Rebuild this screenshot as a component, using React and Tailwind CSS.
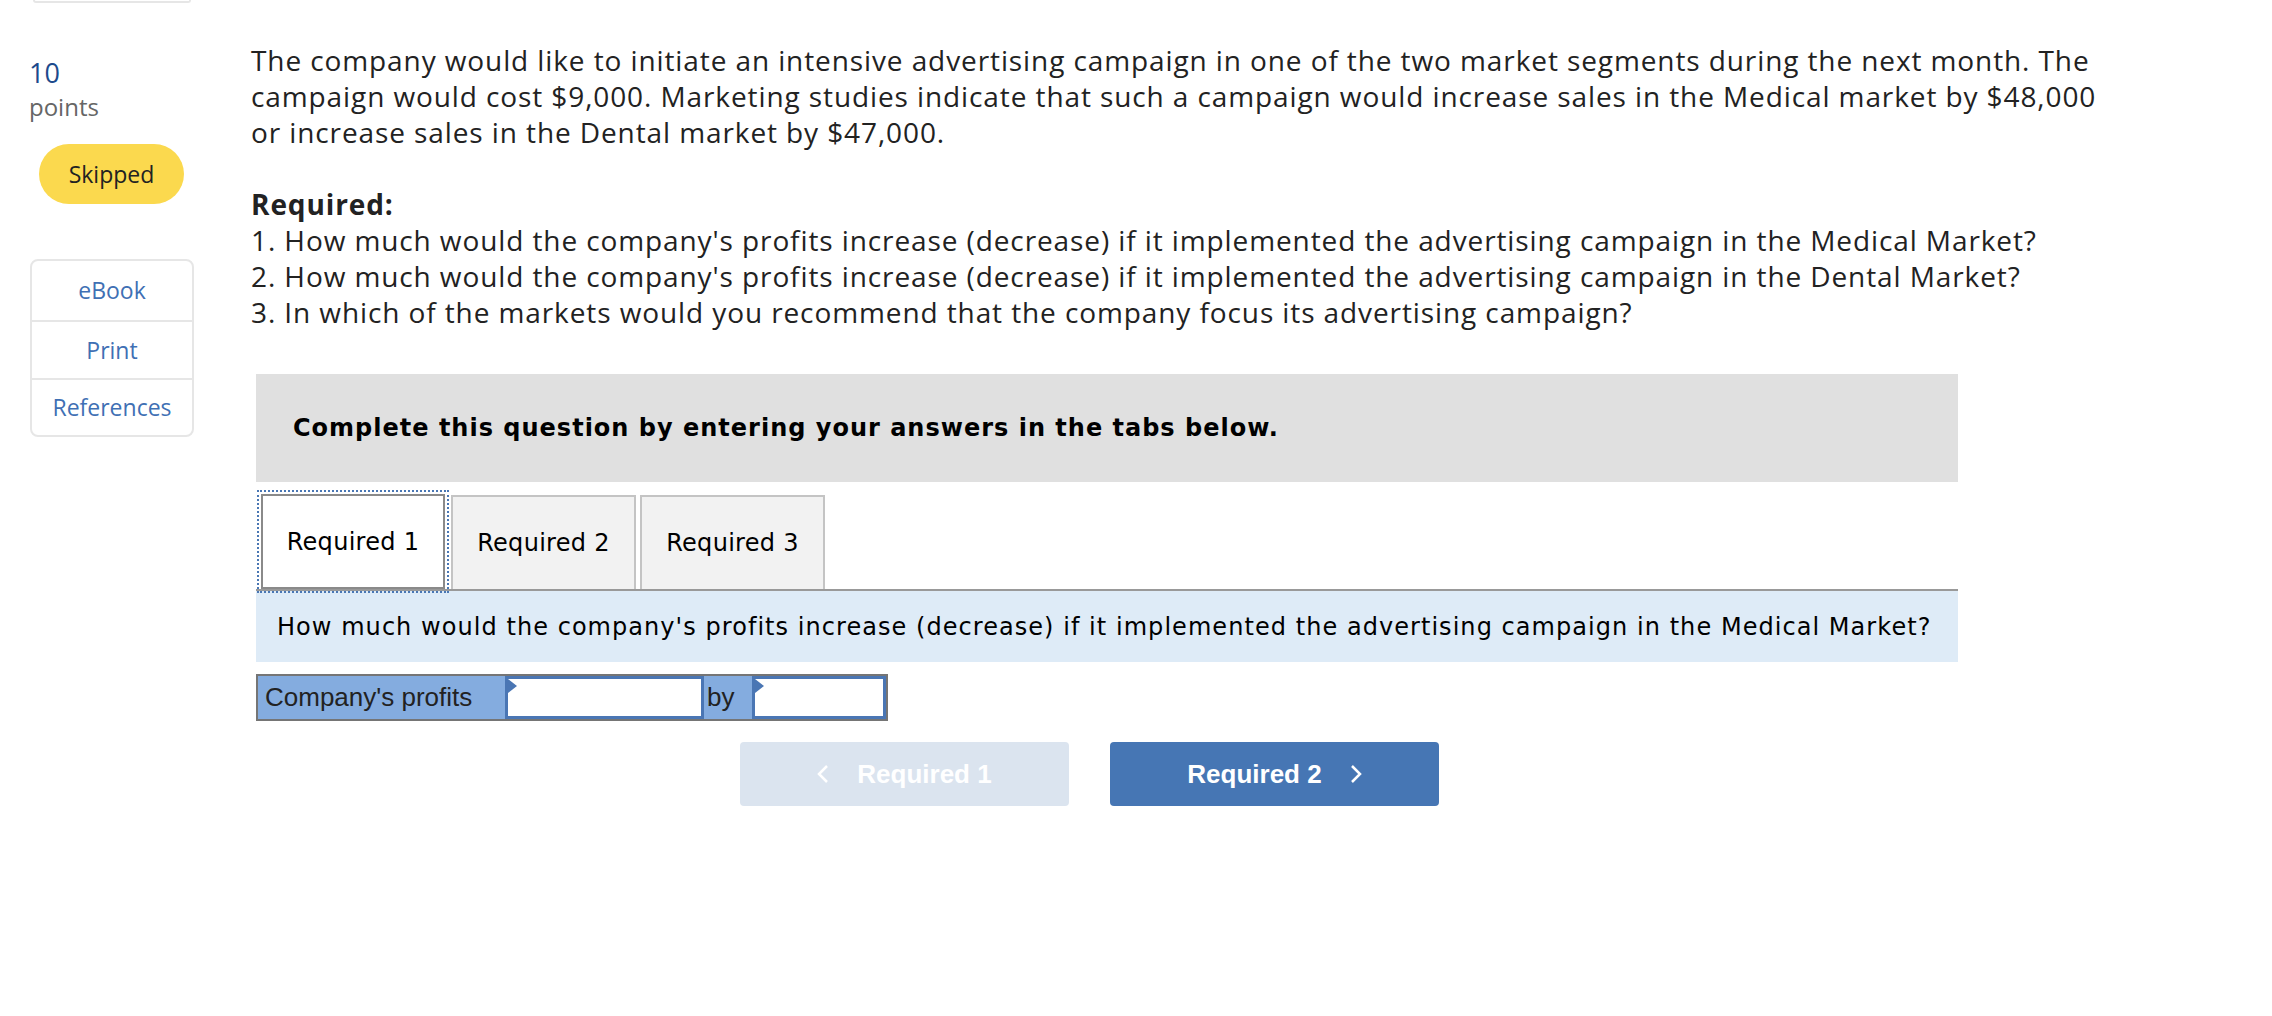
import React from "react"

const sans = { fontFamily: "'Open Sans', Lato, sans-serif" }

const Sidebar = () => {
  return (
    <aside className="w-[251px] shrink-0 font-['Open_Sans',sans-serif]">
      <div className="ml-[33px] h-[3px] w-[158px] rounded-b-lg border-x-2 border-b-2 border-[#e6e6e6]"></div>
      <div className="pl-[29px] pt-[53px]">
        <div className="text-[27px] leading-[34px] text-[#1d4a8c]">10</div>
        <div className="text-[24px] leading-[34px] text-[#666666]">points</div>
      </div>
      <div className="ml-[39px] mt-[20px] flex h-[60px] w-[145px] items-center justify-center rounded-full bg-[#fbd94e] text-[23px] text-[#222222]">
        Skipped
      </div>
      <ul className="ml-[30px] mt-[55px] w-[164px] rounded-lg border-2 border-[#e6e6e6] text-[23px] text-[#3f70b4]">
        <li className="flex h-[61px] items-center justify-center border-b-2 border-[#e6e6e6]">eBook</li>
        <li className="flex h-[58px] items-center justify-center border-b-2 border-[#e6e6e6]">Print</li>
        <li className="flex h-[55px] items-center justify-center">References</li>
      </ul>
    </aside>
  )
}

const Tab = ({ label, active, className }) => (
  <div
    className={
      active
        ? "flex h-[95px] w-[184px] items-center justify-center border-2 border-[#8a8a8a] bg-white outline-2 outline-dotted outline-offset-2 outline-[#4a77b4] " + className
        : "flex h-[94px] w-[185px] items-center justify-center border-2 border-b-0 border-[#c4c4c4] bg-[#f2f2f2] " + className
    }
  >
    {label}
  </div>
)

const InputCell = ({ width }) => (
  <div className={"relative h-full border-[3px] border-[#4a76b4] bg-white " + width}>
    <span className="absolute left-0 top-0 h-0 w-0 border-y-[7px] border-l-[9px] border-y-transparent border-l-[#4a76b4]"></span>
  </div>
)

export default function App() {
  return (
    <div className="flex min-h-screen bg-white">
      <Sidebar />

      <main className="w-[1900px]">
        {/* Question text */}
        <div className="w-[1861px] pt-[42px] text-[28px] leading-[36px] tracking-[0.9px] text-[#222222]" style={sans}>
          <p>
            The company would like to initiate an intensive advertising campaign in one of the two market segments during the next month. The campaign would cost $9,000. Marketing studies indicate that such a campaign would increase sales in the Medical market by $48,000 or increase sales in the Dental market by $47,000.
          </p>
          <p className="mt-[36px] font-bold">Required:</p>
          <p>1. How much would the company's profits increase (decrease) if it implemented the advertising campaign in the Medical Market?</p>
          <p>2. How much would the company's profits increase (decrease) if it implemented the advertising campaign in the Dental Market?</p>
          <p>3. In which of the markets would you recommend that the company focus its advertising campaign?</p>
        </div>

        {/* Answer area */}
        <div className="ml-[5px] mt-[44px] w-[1702px] font-['DejaVu_Sans',Verdana,sans-serif] text-black">
          <div className="flex h-[108px] items-center bg-[#e0e0e0] pl-[37px] text-[24px] font-bold tracking-[1px]">
            Complete this question by entering your answers in the tabs below.
          </div>

          <div className="mt-[12px] flex items-end text-[24px] tracking-[0.3px]">
            <Tab label="Required 1" active className="ml-[5px]" />
            <Tab label="Required 2" className="ml-[6px]" />
            <Tab label="Required 3" className="ml-[4px]" />
          </div>

          <div className="flex h-[73px] items-center border-t-2 border-[#999999] bg-[#deebf7] pl-[21px] text-[24px] tracking-[1.05px]">
            How much would the company's profits increase (decrease) if it implemented the advertising campaign in the Medical Market?
          </div>

          <div className="mt-[12px] flex h-[47px] w-[632px] border-2 border-[#757575] font-['Liberation_Sans',Arial,sans-serif] text-[26px] text-[#222222]">
            <div className="flex w-[247px] items-center bg-[#84acdf] pl-[7px]">Company's profits</div>
            <InputCell width="w-[199px]" />
            <div className="flex w-[48px] items-center bg-[#84acdf] pl-[3px]">by</div>
            <InputCell width="flex-1" />
          </div>

          <div className="ml-[484px] mt-[21px] flex gap-[41px] font-['Liberation_Sans',Arial,sans-serif] text-[26px] font-bold text-white">
            <button className="flex h-[64px] w-[329px] items-center justify-center gap-[28px] rounded bg-[#dbe4ef]">
              <svg width="12" height="20" viewBox="0 0 12 20" fill="none" stroke="white" strokeWidth="2.5">
                <path d="M10 2 L2 10 L10 18" />
              </svg>
              <span>Required 1</span>
            </button>
            <button className="flex h-[64px] w-[329px] items-center justify-center gap-[28px] rounded bg-[#4676b4]">
              <span>Required 2</span>
              <svg width="12" height="20" viewBox="0 0 12 20" fill="none" stroke="white" strokeWidth="2.5">
                <path d="M2 2 L10 10 L2 18" />
              </svg>
            </button>
          </div>
        </div>
      </main>
    </div>
  )
}
